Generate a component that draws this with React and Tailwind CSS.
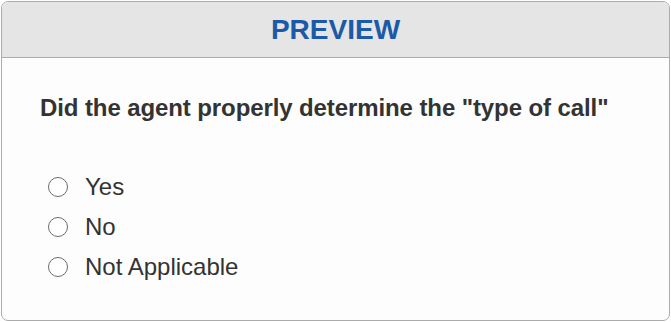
import React from "react";

const options = ["Yes", "No", "Not Applicable"];

const App = () => {
  return (
    <div className="p-px" style={{ fontFamily: '"Liberation Sans", Arial, sans-serif' }}>
      <div className="w-[669px] h-[320px] border border-[#ababab] rounded-[7px] bg-[#fdfdfd] overflow-hidden flex flex-col">
        {/* Header */}
        <div className="h-[56px] shrink-0 bg-[#e5e5e5] border-b border-[#ababab] flex items-center justify-center">
          <h1 className="text-[28px] font-bold text-[#1b5aa9] leading-none">PREVIEW</h1>
        </div>

        {/* Question */}
        <div className="px-[38px] pt-[36px]">
          <p className="text-[24px] font-bold text-[#333333] leading-[28px] tracking-[-0.1px]">
            Did the agent properly determine the "type of call"
          </p>
        </div>

        {/* Options */}
        <div className="pl-[46px] pt-[51px] flex flex-col gap-[12px]">
          {options.map(o => (
            <label key={o} className="flex items-center gap-[17px] h-[28px]">
              <span className="w-[20px] h-[20px] rounded-full border border-[#6b6b6b] bg-white shrink-0" />
              <span className="text-[24px] text-[#333333] leading-none">{o}</span>
            </label>
          ))}
        </div>
      </div>
    </div>
  );
};

export default App;
